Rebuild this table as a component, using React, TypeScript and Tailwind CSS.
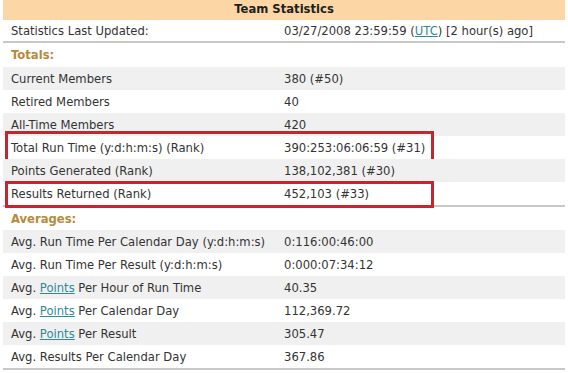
import React from "react";

type Row = { label: React.ReactNode; value: React.ReactNode; box?: "a" | "b" };

const Link = ({ children }: { children: React.ReactNode }) => (
  <span className="text-[#2f8a96] underline">{children}</span>
);

const totals: Row[] = [
  { label: "Current Members", value: "380 (#50)" },
  { label: "Retired Members", value: "40" },
  { label: "All-Time Members", value: "420" },
  { label: "Total Run Time (y:d:h:m:s) (Rank)", value: "390:253:06:06:59 (#31)", box: "a" },
  { label: "Points Generated (Rank)", value: "138,102,381 (#30)" },
  { label: "Results Returned (Rank)", value: "452,103 (#33)", box: "b" },
];

const averages: Row[] = [
  { label: "Avg. Run Time Per Calendar Day (y:d:h:m:s)", value: "0:116:00:46:00" },
  { label: "Avg. Run Time Per Result (y:d:h:m:s)", value: "0:000:07:34:12" },
  { label: <>Avg. <Link>Points</Link> Per Hour of Run Time</>, value: "40.35" },
  { label: <>Avg. <Link>Points</Link> Per Calendar Day</>, value: "112,369.72" },
  { label: <>Avg. <Link>Points</Link> Per Result</>, value: "305.47" },
  { label: "Avg. Results Per Calendar Day", value: "367.86" },
];

function DataRow({ row, i }: { row: Row; i: number }) {
  return (
    <div
      className={`relative grid grid-cols-[281px_1fr] h-[23px] items-center pt-[2px] ${
        i % 2 === 0 ? "bg-[#f0f0f0]" : "bg-white"
      }`}
    >
      <div className="pl-[8px] whitespace-nowrap">{row.label}</div>
      <div className="whitespace-nowrap">{row.value}</div>
      {row.box === "a" && (
        <div className="absolute left-[2px] w-[429px] top-[-5px] h-[32px] border-[3px] border-[#c3262f]" />
      )}
      {row.box === "b" && (
        <div className="absolute left-[2px] w-[429px] top-[-1px] h-[27px] border-[3px] border-[#c3262f]" />
      )}
    </div>
  );
}

function Section({ title, rows, h }: { title: string; rows: Row[]; h: string }) {
  return (
    <div>
      <div className={`${h} flex items-center pt-[2px] pl-[8px] font-bold text-[#b8893a]`}>{title}</div>
      <div className="border-b-2 border-[#c8c8c8]">
        {rows.map((r, i) => (
          <DataRow key={i} row={r} i={i} />
        ))}
      </div>
    </div>
  );
}

export default function App() {
  return (
    <div className="w-[568px] h-[373px] bg-white px-[3px] text-[11.6px] text-[#333] font-['DejaVu_Sans',Verdana,sans-serif] overflow-hidden">
      <div className="h-[20px] bg-[#fcd7a5] flex items-center justify-center font-bold text-[#1e1e1e]">
        Team Statistics
      </div>
      <div className="mt-[2px] grid grid-cols-[281px_1fr] h-[21px] items-center pt-[1px] border-b-2 border-[#c8c8c8]">
        <div className="pl-[8px]">Statistics Last Updated:</div>
        <div className="whitespace-nowrap">
          03/27/2008 23:59:59 (<Link>UTC</Link>) [2 hour(s) ago]
        </div>
      </div>
      <Section title="Totals:" rows={totals} h="h-[24px]" />
      <Section title="Averages:" rows={averages} h="h-[23px]" />
    </div>
  );
}
